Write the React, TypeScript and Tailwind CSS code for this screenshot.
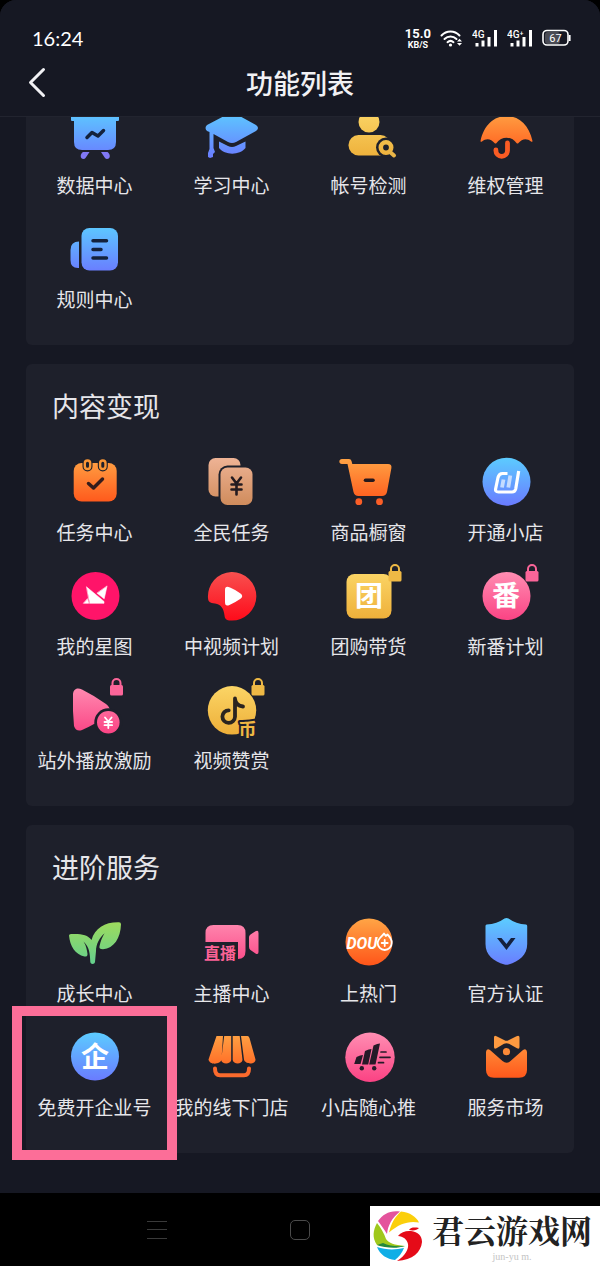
import type { ReactNode } from "react";

type Item = {
  label: string;
  icon: ReactNode;
  marked?: boolean;
};

const CARD = "#1e202b";

// 上から下へのグラデーション
const gradients = [
  { id: "blue", from: "#5ccbff", to: "#6a7cff" },
  { id: "orange", from: "#ffa445", to: "#ff5419" },
  { id: "yellow", from: "#fbd566", to: "#eeb03a" },
  { id: "copper", from: "#eeb395", to: "#d08c5c" },
  { id: "pink", from: "#ff8db2", to: "#fb4585" },
  { id: "red", from: "#f8504f", to: "#fe0d1c" },
  { id: "green", from: "#a2dc5a", to: "#61cf90" },
];

const Gradients = () => (
  <svg className="absolute h-0 w-0" aria-hidden="true">
    <defs>
      {gradients.map((g) => (
        <linearGradient
          key={g.id}
          id={g.id}
          gradientUnits="userSpaceOnUse"
          x1="0"
          y1="8"
          x2="0"
          y2="55"
        >
          <stop offset="0" stopColor={g.from} />
          <stop offset="1" stopColor={g.to} />
        </linearGradient>
      ))}
    </defs>
  </svg>
);

const Icon = ({ children }: { children: ReactNode }) => (
  <svg
    viewBox="0 0 64 64"
    className="h-16 w-16 overflow-visible"
    fill="none"
    strokeLinecap="round"
    strokeLinejoin="round"
    aria-hidden="true"
  >
    {children}
  </svg>
);

const Lock = ({ x = 0, color }: { x?: number; color: string }) => (
  <g transform={`translate(${x} 0)`}>
    <path d="M54 8V5a4 4 0 0 1 8 0v3" stroke={color} strokeWidth="2" />
    <rect x="51.5" y="7" width="13" height="10.5" rx="1.5" fill={color} />
  </g>
);

const Glyph = ({ children }: { children: string }) => (
  <text
    x="32"
    y="42"
    textAnchor="middle"
    fill="#fff"
    className="text-[28px] font-bold"
  >
    {children}
  </text>
);

const firstItems: Item[] = [
  {
    label: "数据中心",
    icon: (
      <Icon>
        <path d="M8 8h48v9q0 1-1 1h-2v21q0 8-8 8H19q-8 0-8-8V18H9q-1 0-1-1z" fill="url(#blue)" />
        <path d="M24 34.500l5-5 6 3.500 5.500-5.500" stroke="#14223c" strokeWidth="3.500" />
        <path d="M20 49h6.500l-4 6c-1.500 1.800-5 .8-4.800-2 .1-2 1-3 2.300-4zM44.500 49H38l4 6c1.500 1.800 5 .8 4.800-2-.1-2-1-3-2.300-4z" fill="#8178f5" />
      </Icon>
    ),
  },
  {
    label: "学习中心",
    icon: (
      <Icon>
        <path d="M28 11q4-2 8 0l20 11q4 3 0 6L36 39q-4 2-8 0L13.500 31v14l1.500 4-2 2v3l-3 1-2-1v-4l1.500-4V29L7 28q-3-3 0-6z" fill="url(#blue)" />
        <path d="M19 38.500l9 4.500q4 2 8 0l9.500-4.500V45c-6 7.500-20.500 7.500-26.500 0z" fill="url(#blue)" />
      </Icon>
    ),
  },
  {
    label: "帐号检测",
    icon: (
      <Icon>
        <circle cx="32" cy="19" r="10.500" fill="url(#yellow)" />
        <rect x="11.500" y="32" width="42" height="20.500" rx="10" fill="url(#yellow)" />
        <path d="M44 53l14 3V40" fill={CARD} />
        <circle cx="49" cy="44.500" r="10" fill={CARD} />
        <circle cx="49" cy="44.500" r="5.200" stroke="url(#yellow)" strokeWidth="4.600" />
        <path d="M53 49l4 3.500" stroke="#eab547" strokeWidth="4" />
      </Icon>
    ),
  },
  {
    label: "维权管理",
    icon: (
      <Icon>
        <path d="M6.500 38C10 22 20 13 32.500 13S55 22 58.500 38c0 1-1 1-1.500.5-4-3.500-9-3-12.500 1.500q-1 1-2 0c-5-7-15-7-20 0q-1 1-2 0C17 35.500 12 35 8 38.500c-.5.5-1.500.5-1.500-.5z" fill="url(#orange)" />
        <path d="M33.500 40v7.500a5.800 5.800 0 0 1-11.600 0V47" stroke={CARD} strokeWidth="7.500" />
        <path d="M33.500 40v7.500a5.800 5.800 0 0 1-11.600 0V47" stroke="#fa5c24" strokeWidth="4.800" />
      </Icon>
    ),
  },
  {
    label: "规则中心",
    icon: (
      <Icon>
        <path d="M16 24.500v26.500h-1q-7.500 0-7.500-8V33q0-8.500 8.500-8.500z" fill="url(#blue)" />
        <rect x="18.500" y="11" width="36.500" height="42.500" rx="8" fill="url(#blue)" />
        <path d="M30 23.700h13.500M30 32.400h8M30 41h13.500" stroke="#14223c" strokeWidth="3.500" />
      </Icon>
    ),
  },
];

const contentItems: Item[] = [
  {
    label: "任务中心",
    icon: (
      <Icon>
        <rect x="10.700" y="13" width="43" height="38.500" rx="8" fill="url(#orange)" />
        <path d="M24.500 13v3.500M39.800 13v3.500" stroke={CARD} strokeWidth="10" />
        <rect x="21.800" y="10.500" width="5.400" height="8.500" rx="2.700" stroke="#f99535" strokeWidth="2.400" />
        <rect x="37.100" y="10.500" width="5.400" height="8.500" rx="2.700" stroke="#f99535" strokeWidth="2.400" />
        <path d="M25.500 33.500l5 4.500 9-9" stroke="#351c1c" strokeWidth="3.500" />
      </Icon>
    ),
  },
  {
    label: "全民任务",
    icon: (
      <Icon>
        <rect x="8.500" y="8" width="32" height="38.500" rx="7" fill="url(#copper)" />
        <rect x="18.500" y="15.500" width="36" height="41" rx="9" fill={CARD} />
        <rect x="20.500" y="17.500" width="32" height="37.500" rx="7" fill="url(#copper)" />
        <path d="M32 27.500l4.500 6 4.500-6M31.500 34.500h10M31.500 39.500h10M36.500 34v10.500" stroke="#241b20" strokeWidth="2.600" />
      </Icon>
    ),
  },
  {
    label: "商品橱窗",
    icon: (
      <Icon>
        <path d="M5 9h7q2 0 2.500 2l.8 3H51q4 0 3.400 4L50 42q-1 4-5 4H21.500q-4 0-5-4L10.500 14H5c-3.500 0-3.500-5 0-5z" fill="url(#orange)" />
        <path d="M28.500 30.200h7.500" stroke="#26191d" strokeWidth="3.600" />
        <circle cx="21.800" cy="51.700" r="3.400" fill="#fb5e27" />
        <circle cx="42.500" cy="51.700" r="3.400" fill="#fb5e27" />
      </Icon>
    ),
  },
  {
    label: "开通小店",
    icon: (
      <Icon>
        <circle cx="32.500" cy="31.700" r="24" fill="url(#blue)" />
        <path d="M33.500 23.500h-5q-3.500 0-4.500 4l-2.300 11q-.8 3.500 2.800 3.500H38q3 0 3.700-3l3-18" stroke="#fff" strokeWidth="3.200" strokeLinecap="butt" />
        <path d="M29.500 29.500l-1.500 8M36.300 25.500l-2 12" stroke="#c4dcff" strokeWidth="3.800" strokeLinecap="butt" />
      </Icon>
    ),
  },
  {
    label: "我的星图",
    icon: (
      <Icon>
        <circle cx="32.500" cy="32" r="24" fill="#ff1469" />
        <path d="M23.700 23L41 37.500v1.800H26.800zM44 22.300l-2.800 12.500-7-5.500zM24.500 35l1.200 4.300h-5z" fill="#fff" stroke="#fff" strokeWidth=".6" />
      </Icon>
    ),
  },
  {
    label: "中视频计划",
    icon: (
      <Icon>
        <path d="M8 34A24.200 24.200 0 1 1 31 56.400c-5 0-6-1.500-6.500-5-.8-7-3.500-11-9.500-11.900C10 39 8.200 38 8 34z" fill="url(#red)" />
        <path d="M25 26c0-3.500 2-4 5-2.500q5 2 10.500 6c2.300 1.800 2.300 3.500 0 5.200Q35 38.500 29.500 41c-3 1.200-4.500.5-4.500-3z" fill="#fff" />
      </Icon>
    ),
  },
  {
    label: "团购带货",
    icon: (
      <Icon>
        <rect x="9.500" y="10" width="45" height="44.500" rx="8" fill="url(#yellow)" />
        <Glyph>团</Glyph>
        <Lock color="#efb945" />
      </Icon>
    ),
  },
  {
    label: "新番计划",
    icon: (
      <Icon>
        <circle cx="32.500" cy="32" r="24" fill="url(#pink)" />
        <Glyph>番</Glyph>
        <Lock color="#fb6599" />
      </Icon>
    ),
  },
  {
    label: "站外播放激励",
    icon: (
      <Icon>
        <path d="M10 17c0-6 4-8 9-5.500Q32 18 43 26c5 4 5 8 0 12q-12 9-24 14-6 2-8-4-1.500-15-1-31z" fill="url(#pink)" />
        <circle cx="45.300" cy="44.300" r="14" fill={CARD} />
        <circle cx="45.300" cy="44.300" r="11.300" fill="url(#pink)" />
        <path d="M42 39.500l3.300 4 3.300-4M41.500 44h7.600M41.500 47.200h7.600M45.300 44v6" stroke="#fff" strokeWidth="1.800" />
        <Lock x={-4.500} color="#fb6599" />
      </Icon>
    ),
  },
  {
    label: "视频赞赏",
    icon: (
      <Icon>
        <circle cx="32" cy="32.300" r="24.200" fill="url(#yellow)" />
        <path d="M35 20.500v18.300a6.300 6.300 0 1 1-6.300-6.500M35 21c.5 4 3.500 7 8 7.500" stroke="#2a2420" strokeWidth="3.800" />
        <text
          x="47.500"
          y="58"
          textAnchor="middle"
          fill="#f0b743"
          stroke={CARD}
          strokeWidth="4"
          paintOrder="stroke"
          className="text-[18px] font-bold"
        >
          币
        </text>
        <Lock color="#efb945" />
      </Icon>
    ),
  },
];

const serviceItems: Item[] = [
  {
    label: "成长中心",
    icon: (
      <Icon>
        <path d="M6 24.500q0-1.500 2-1.500c9-.5 17 .5 20.500 6C32 17 42 11 56 11.300q2 0 2 2c-.5 14-7 24-18 25-3 0-4-1-3.500-3 1-5.500 3-9.500 5-13-5 4.500-8.500 11-8.500 17.700L32 51c-.3 2.500-4.500 2.500-4.700 0-.3-8-.8-15-6.800-20.500 3 4.500 3.500 9 4 12.500 0 2-1 2.700-3 2.500C12 43.500 7 35 6 24.500z" fill="url(#green)" />
      </Icon>
    ),
  },
  {
    label: "主播中心",
    icon: (
      <Icon>
        <path d="M5.500 31V22q0-8 8-8h24q8 0 8 8v18q0 8-7.500 8V31z" fill="url(#pink)" />
        <path d="M49 26q0-1.500 1.500-2.500l5-3.200q3-1.500 3 1.700v19q0 3-3 1.500l-5-3.500Q49 38 49 36z" fill="url(#pink)" />
        <text
          x="20"
          y="48"
          textAnchor="middle"
          fill="#fb6295"
          className="text-[16px] font-bold"
        >
          直播
        </text>
      </Icon>
    ),
  },
  {
    label: "上热门",
    icon: (
      <Icon>
        <circle cx="32" cy="31" r="23.500" fill="url(#orange)" />
        <text
          x="25"
          y="37.5"
          textAnchor="middle"
          fill="#fff"
          className="font-[Roboto,sans-serif] text-[16px] font-bold italic"
        >
          DOU
        </text>
        <path d="M40.700 32c0-4 4-6 6.300-9.500l1.800 2.500 1.700-1.500c2.500 2.500 4.500 5 4.200 8.500a7 7 0 0 1-14 0zM47.700 29v6M44.700 32h6" stroke="#fff" strokeWidth="1.800" />
      </Icon>
    ),
  },
  {
    label: "官方认证",
    icon: (
      <Icon>
        <path d="M30.500 7.500q2-1 4 0Q42 13 52 13.500q1.200.2 1.200 1.500v18c0 11-8 17.500-18.700 20.500q-2 .5-4 0C19.500 50.500 11.500 44 11.500 33V15q0-1.300 1.200-1.500Q23 13 30.500 7.500z" fill="url(#blue)" />
        <path d="M23 27h4.500l5 6 4.500-6h4.500l-9 12z" fill="#14203d" />
      </Icon>
    ),
  },
  {
    label: "免费开企业号",
    marked: true,
    icon: (
      <Icon>
        <circle cx="32" cy="31.500" r="24" fill="url(#blue)" />
        <Glyph>企</Glyph>
      </Icon>
    ),
  },
  {
    label: "我的线下门店",
    icon: (
      <Icon>
        <path d="M16.500 11h6.500l-1.500 23.500c-.8 5-12 6-13 0zM24.200 11h7v24c-.5 4.500-9.700 4.500-10 0zM32.700 11h7l2.800 24c-.5 4.500-9.200 4.500-9.800 0zM41 11h6.500q1.300 0 2 2l6 21.500c0 5.500-10.500 5-11.500 0z" fill="url(#orange)" />
        <path d="M15 43.500q0 6.800 5 6.800h24q5 0 5-6.800" stroke="#fb6a2d" strokeWidth="4" />
      </Icon>
    ),
  },
  {
    label: "小店随心推",
    icon: (
      <Icon>
        <circle cx="33" cy="32.300" r="24.700" fill="url(#pink)" />
        <path d="M19.500 32q4-2 6.500-2l-2.500 9h-6.300zM28 26q4-2 6.500-2l-3.300 15.500H25zM36.500 20.500q4-2 6.500-2L38.500 39.500h-6.300z" fill="#261a28" />
        <circle cx="24.800" cy="43.300" r="2.200" fill="#261a28" />
        <circle cx="37.200" cy="43.300" r="2.200" fill="#261a28" />
        <path d="M44 27h5M43 32.300h10M41.500 37.700h5" stroke="#261a28" strokeWidth="1.700" />
      </Icon>
    ),
  },
  {
    label: "服务市场",
    icon: (
      <Icon>
        <path d="M20 12.500q0-2.500 2.500-1.300l8 4q2 1 4 0l8-4q3-1.200 3 1.300v9.500q0 2.500-2.500 1.300l-8-4.500q-2.500-1-5 0l-7.500 4.500Q20 24.500 20 22z" fill="#fd9a40" />
        <circle cx="32.500" cy="26.700" r="5" fill={CARD} />
        <circle cx="32.500" cy="26.700" r="3.600" fill="#fd8b38" />
        <path d="M12 27q.5-4 4-2l12.500 11q4 3.500 8 0L49 25q3.500-2 4 2v18q0 7.700-8 7.700H20q-8 0-8-7.700z" fill="url(#orange)" />
      </Icon>
    ),
  },
];

const ItemGrid = ({ items }: { items: Item[] }) => (
  <ul className="grid grid-cols-4 gap-y-[18px]">
    {items.map((item) => (
      <li key={item.label} className="relative">
        <a href="#" className="flex flex-col items-center gap-1">
          {item.icon}
          <span className="text-[19px] leading-7 whitespace-nowrap text-[#e6e6ea]">
            {item.label}
          </span>
        </a>
        {item.marked && (
          <div className="pointer-events-none absolute -inset-x-[14px] -top-[19px] -bottom-[39px] z-10 border-10 border-[#fc6e98]" />
        )}
      </li>
    ))}
  </ul>
);

const Card = ({ title, items }: { title: string; items: Item[] }) => (
  <section className="rounded-md bg-[#1e202b] pt-6 pb-8">
    <h2 className="mb-[26px] px-[26px] text-[27px] leading-9 text-[#e6e6ea]">
      {title}
    </h2>
    <ItemGrid items={items} />
  </section>
);

const Signal = ({ label }: { label: string }) => (
  <svg viewBox="0 0 26 18" className="h-[18px] w-[26px]" aria-hidden="true">
    <text
      x="0"
      y="9"
      fill="#fff"
      className="font-[Roboto,sans-serif] text-[10px] font-medium"
    >
      {label}
    </text>
    <path
      d="M5 14v3.500M11 11.500v6M17 8v9.500M23.500 1v16.500"
      stroke="#fff"
      strokeWidth="3"
    />
  </svg>
);

const StatusBar = () => (
  <div className="flex h-8 items-center justify-between pr-[29px] pl-8 text-white">
    <span className="font-[Lato,sans-serif] text-[20px]">16:24</span>
    <div className="flex items-center gap-[9px]">
      <div className="text-center font-[Roboto,sans-serif] font-bold">
        <p className="text-[13px] leading-[13px]">15.0</p>
        <p className="text-[9px] leading-[10px]">KB/S</p>
      </div>
      <svg viewBox="0 0 23 18" className="h-[18px] w-[23px]" fill="none" aria-hidden="true">
        <path
          d="M1.500 6.500c5-5.300 13-5.300 18 0M4.500 10c3.500-3.500 8.500-3.500 12 0M7.500 13.200c2-1.800 4-1.800 6 0"
          stroke="#fff"
          strokeWidth="2"
          strokeLinecap="round"
        />
        <circle cx="10.500" cy="16" r="1.600" fill="#fff" />
        <path d="M17 12.500l2.500-2.800 2.500 2.800zM17 14l2.500 2.800 2.500-2.800z" fill="#fff" />
      </svg>
      <Signal label="4G" />
      <Signal label="4G⁺" />
      <svg viewBox="0 0 29 18" className="h-[18px] w-[29px]" fill="none" aria-hidden="true">
        <rect x="3" y="3" width="15" height="12" rx="3" fill="#4a4b54" />
        <rect x="1" y="1.500" width="25" height="14.500" rx="4" stroke="#fff" strokeWidth="1.600" />
        <path d="M27.700 6v6" stroke="#fff" strokeWidth="1.800" />
        <text
          x="13.500"
          y="12.800"
          textAnchor="middle"
          fill="#fff"
          className="font-[Roboto,sans-serif] text-[11px]"
        >
          67
        </text>
      </svg>
    </div>
  </div>
);

const Header = () => (
  <header className="relative z-20 border-b border-[#22242f] bg-[#161823] pt-[22px] pb-1">
    <StatusBar />
    <div className="grid h-[58px] grid-cols-[1fr_auto_1fr] items-center">
      <button type="button" aria-label="返回" className="ml-7 w-5 cursor-pointer">
        <svg viewBox="0 0 20 32" className="h-8 w-5" fill="none">
          <path
            d="M15.500 2.500L2.500 15.500l13 13"
            stroke="#f1f1f4"
            strokeWidth="3"
            strokeLinecap="round"
            strokeLinejoin="round"
          />
        </svg>
      </button>
      <h1 className="text-[27px] font-medium text-[#f1f1f4]">功能列表</h1>
    </div>
  </header>
);

const Watermark = () => (
  <div className="absolute right-0 bottom-0 flex h-[60px] w-[230px] gap-[10px] bg-white">
    <svg viewBox="0 0 52 60" className="h-[60px] w-[52px] shrink-0" aria-hidden="true">
      <path d="M8 15C13 8 20 4 30 5.500 22 12 18 19 17 28 14 23 11 19 8 15z" fill="#e4539c" />
      <path d="M31 5.500c9 1 15 5 18 11-10-2-20 1-30 10 2-9 6-16 12-21z" fill="#fbcf0b" />
      <path d="M7 17c4 5 7 10 9 16 3 4 8 6 19 7-10 2-20 1-28-1C2 32 3 24 7 17z" fill="#9fc81c" />
      <path d="M13 37c6 3 13 3.500 22 3-8 3-20 2-28-1z" fill="#22883c" />
      <path d="M7 41c9 3 18 3 27 1-2 5-5 9-9 12C17 53 10 49 7 41z" fill="#10aee6" />
      <path d="M28 30c3-4 8-5.500 13-5 7 .8 11 5 11 11C51 46 43 54 27 55c8-5 12-12 11-17-1-5-5-7.500-10-8zM39 24c2-3 6-2.500 10-2-2 2-5 3-10 2z" fill="#e50b18" />
    </svg>
    <div className="text-center">
      <p className="font-['Noto_Serif_CJK_SC','Noto_Sans_CJK_SC',serif] text-[32px] leading-[46px] font-bold whitespace-nowrap text-[#222]">
        君云游戏网
      </p>
      <p className="font-['Liberation_Serif',serif] text-[10px] leading-[10px] text-[#c4c4c4]">
        jun-yu m.
      </p>
    </div>
  </div>
);

const NavBar = () => (
  <nav className="relative flex h-[73px] items-center bg-black">
    <div className="flex flex-1 justify-center gap-[123px]">
      <button type="button" aria-label="菜单" className="cursor-pointer">
        <svg viewBox="0 0 20 20" className="h-5 w-5">
          <path d="M0 1.500h20M0 9.500h20M0 18.500h20" stroke="#3a3a3a" />
        </svg>
      </button>
      <button
        type="button"
        aria-label="主页"
        className="h-5 w-5 cursor-pointer rounded-[5px] border border-[#4a4a4a]"
      />
      <span className="w-5" />
    </div>
    <Watermark />
  </nav>
);

const App = () => {
  return (
    <div className="flex min-h-screen flex-col bg-black font-['Noto_Sans_CJK_SC',sans-serif]">
      <Gradients />
      <div className="flex-1 overflow-hidden rounded-t-[16px] bg-[#161823]">
        <Header />
        <main className="-mt-[14px] flex flex-col gap-[19px] px-[26px] pb-10">
          <section className="rounded-b-md bg-[#1e202b] pb-8">
            <ItemGrid items={firstItems} />
          </section>
          <Card title="内容变现" items={contentItems} />
          <Card title="进阶服务" items={serviceItems} />
        </main>
      </div>
      <NavBar />
    </div>
  );
};

export default App;
